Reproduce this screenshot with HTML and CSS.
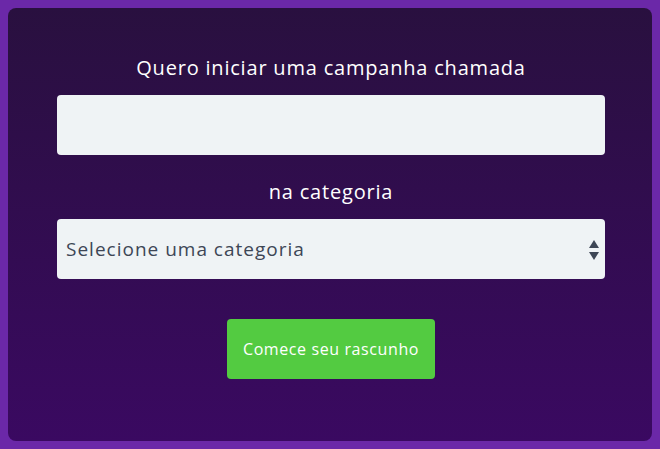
FILE: index.html
```html
<!DOCTYPE html>
<html lang="pt">

<head>
    <meta charset="UTF-8">
    <title>Comece uma campanha</title>
    <link rel="stylesheet" href="styles.css">
</head>

<body>
    <div class="panel">
        <p class="label">Quero iniciar uma campanha chamada</p>
        <input type="text" class="field" id="nome">

        <p class="label">na categoria</p>
        <div class="select-wrap">
            <select class="field select" id="categoria">
                <option>Selecione uma categoria</option>
            </select>
            <svg class="arrows" width="12" height="22" viewBox="0 0 12 22">
                <path d="M6 1 L11 9 L1 9 Z" fill="#3d4655"/>
                <path d="M1 13 L11 13 L6 21 Z" fill="#3d4655"/>
            </svg>
        </div>

        <button class="start">Comece seu rascunho</button>
    </div>
</body>

</html>
```

FILE: styles.css
```css
body {
    margin: 0;
    padding: 8px;
    background-color: #6b28a8;
    font-family: 'Open Sans', sans-serif;
}

.panel {
    height: 433px;
    box-sizing: border-box;
    padding: 46px 47px 0 49px;
    border-radius: 8px;
    background: linear-gradient(to bottom, #29103f, #3a0961);
    display: flex;
    flex-direction: column;
    align-items: center;
}

.label {
    margin: 0;
    color: #ffffff;
    font-size: 20px;
    line-height: 28px;
    letter-spacing: 0.8px;
    text-align: center;
}

.field {
    width: 548px;
    height: 60px;
    box-sizing: border-box;
    border: none;
    border-radius: 4px;
    background-color: #eff3f5;
    margin: 13px 0 23px;
    font-family: 'Open Sans', sans-serif;
}

.select-wrap {
    position: relative;
    margin: 13px 0 40px;
}

.select {
    appearance: none;
    margin: 0;
    padding: 0 9px;
    font-size: 19px;
    letter-spacing: 1px;
    color: #3d4655;
}

.arrows {
    position: absolute;
    right: 5px;
    top: 20px;
}

.start {
    width: 208px;
    height: 60px;
    border: none;
    border-radius: 4px;
    background-color: #53cb41;
    color: #ffffff;
    font-family: 'Open Sans', sans-serif;
    font-size: 16px;
    letter-spacing: 0.6px;
    cursor: pointer;
}
```
